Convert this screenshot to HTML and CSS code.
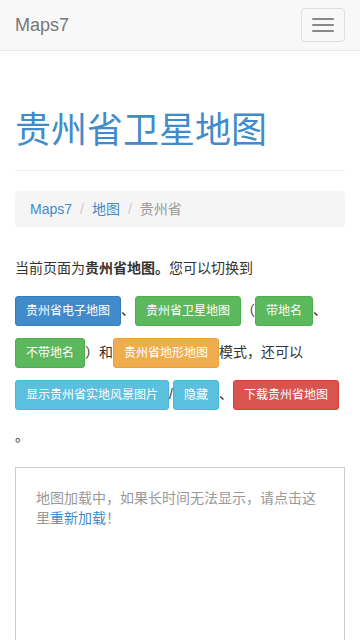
FILE: index.html
```html
<!DOCTYPE html>
<html lang="zh-CN">
<head>
<meta charset="utf-8">
<title>贵州省卫星地图</title>
<link rel="stylesheet" href="styles.css">
</head>
<body>
<nav class="navbar">
  <a class="brand" href="#">Maps7</a>
  <button class="toggle" type="button"><span class="bar"></span><span class="bar"></span><span class="bar"></span></button>
</nav>
<div class="container">
  <div class="page-header"><h1><a href="#">贵州省卫星地图</a></h1></div>
  <ol class="breadcrumb">
    <li><a href="#">Maps7</a></li><li class="sep">/</li><li><a href="#">地图</a></li><li class="sep">/</li><li class="active">贵州省</li>
  </ol>
  <p class="intro">当前页面为<strong>贵州省地图。</strong>您可以切换到<a class="btn primary" href="#">贵州省电子地图</a>、<a class="btn success" href="#">贵州省卫星地图</a>（<a class="btn success" href="#">带地名</a>、<a class="btn success" href="#">不带地名</a>）和<a class="btn warning" href="#">贵州省地形地图</a>模式，还可以<a class="btn info" href="#">显示贵州省实地风景图片</a>/<a class="btn info" href="#">隐藏</a>、<a class="btn danger" href="#">下载贵州省地图</a>。</p>
  <div class="map-box">地图加载中，如果长时间无法显示，请点击这里<a href="#">重新加载</a>！</div>
</div>
</body>
</html>
```
FILE: styles.css
```css
html, body { margin: 0; padding: 0; }
body {
  font-family: "Liberation Sans", Arial, "Noto Sans CJK SC", sans-serif;
  font-size: 14px;
  line-height: 20px;
  color: #333;
  background: #fff;
}
a { color: #428bca; text-decoration: none; }
.navbar {
  height: 50px;
  background: #f8f8f8;
  border-bottom: 1px solid #e7e7e7;
  display: flex;
  align-items: flex-start;
  justify-content: space-between;
}
.brand {
  color: #777;
  font-size: 18px;
  line-height: 20px;
  padding: 15px;
}
.toggle {
  margin: 8px 15px 0 0;
  width: 44px;
  height: 34px;
  padding: 9px 10px;
  border: 1px solid #ddd;
  border-radius: 4px;
  background: transparent;
  display: flex;
  flex-direction: column;
  gap: 4px;
  box-sizing: border-box;
  align-items: center;
  justify-content: center;
}
.bar { display: block; width: 22px; height: 2px; background: #888; border-radius: 1px; }
.container { padding: 0 15px; }
.page-header {
  margin: 60px 0 20px;
  padding-bottom: 9px;
  border-bottom: 1px solid #eee;
}
.page-header h1 {
  margin: 0 0 10px;
  font-size: 36px;
  line-height: 40px;
  font-weight: normal;
}
.breadcrumb {
  list-style: none;
  margin: 0 0 20px;
  padding: 8px 15px;
  background: #f5f5f5;
  border-radius: 4px;
  display: flex;
}
.breadcrumb .sep { color: #ccc; padding: 0 8px; }
.breadcrumb .active { color: #999; }
.intro {
  margin: 0 0 10px;
  line-height: 42px;
}
.intro strong { font-weight: bold; }
.btn {
  display: inline-block;
  font-size: 12px;
  line-height: 18px;
  padding: 5px 10px;
  border: 1px solid transparent;
  border-radius: 3px;
  color: #fff;
  vertical-align: middle;
}
.primary { background: #428bca; border-color: #357ebd; }
.success { background: #5cb85c; border-color: #4cae4c; }
.warning { background: #f0ad4e; border-color: #eea236; }
.info { background: #5bc0de; border-color: #46b8da; }
.danger { background: #d9534f; border-color: #d43f3a; }
.map-box {
  border: 1px solid #ccc;
  padding: 20px;
  height: 400px;
  color: #999;
}
```
